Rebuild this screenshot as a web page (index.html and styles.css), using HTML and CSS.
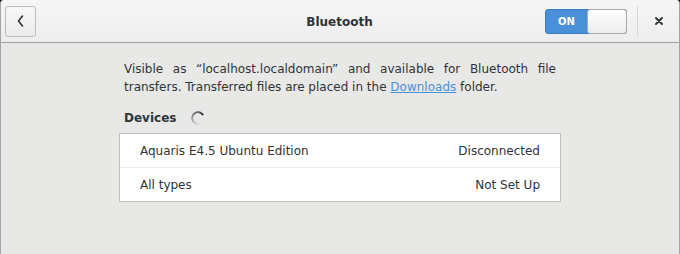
FILE: index.html
```html
<!DOCTYPE html>
<html lang="en">
<head>
    <meta charset="UTF-8">
    <meta name="viewport" content="width=device-width, initial-scale=1.0">
    <title>Bluetooth</title>
    <link rel="stylesheet" href="styles.css">
</head>
<body>
    <div class="window">
        <!-- Header bar -->
        <header class="headerbar">
            <div class="header-start">
                <button class="back-button" type="button" aria-label="Back">
                    <svg width="10" height="12" viewBox="0 0 10 12">
                        <path d="M6.5 1 L2.5 6 L6.5 11" fill="none" stroke="#2e3436" stroke-width="1.6" stroke-linecap="round" stroke-linejoin="round"/>
                    </svg>
                </button>
            </div>
            <div class="title">Bluetooth</div>
            <div class="header-end">
                <div class="switch">
                    <span class="switch-label">ON</span>
                    <span class="switch-knob"></span>
                </div>
                <span class="header-separator"></span>
                <button class="close-button" type="button" aria-label="Close">
                    <svg width="8" height="8" viewBox="0 0 8 8">
                        <path d="M1 1 L7 7 M7 1 L1 7" stroke="#2e3436" stroke-width="1.9" stroke-linecap="round"/>
                    </svg>
                </button>
            </div>
        </header>

        <!-- Panel content -->
        <main class="content">
            <p class="explanation"><span>Visible as “localhost.localdomain” and available for Bluetooth file transfers. Transferred files are placed in the <a href="#">Downloads</a> folder.</span></p>

            <div class="devices-heading">
                <span>Devices</span>
                <span class="spinner"></span>
            </div>

            <div class="device-list">
                <div class="device-row">
                    <span>Aquaris E4.5 Ubuntu Edition</span>
                    <span>Disconnected</span>
                </div>
                <div class="device-row">
                    <span>All types</span>
                    <span>Not Set Up</span>
                </div>
            </div>
        </main>
    </div>
</body>
</html>
```

FILE: styles.css
```css
:root {
    --text-color: #2e3436;
    --window-bg: #e8e8e7;
    --border-color: #b6b6b3;
    --accent-color: #4a90d9; /* Adwaita blue */
}

body {
    margin: 0;
    background: #000000;
    font-family: 'DejaVu Sans', sans-serif;
    font-size: 12px;
    color: var(--text-color);
}

.window {
    height: 254px;
    overflow: hidden;
    background: var(--window-bg);
    border-left: 1px solid #a4a4a4;
    border-right: 1px solid #a4a4a4;
    border-radius: 4px 4px 0 0;
}

/* Header bar */
.headerbar {
    height: 42px;
    display: grid;
    grid-template-columns: 1fr auto 1fr;
    align-items: center;
    padding: 0 5px 0 4px;
    background: linear-gradient(to bottom, #f6f6f6, #ededed);
    border-bottom: 1px solid #a2a2a0;
}

.header-start {
    display: flex;
}

.header-end {
    display: flex;
    align-items: center;
    justify-content: flex-end;
}

.title {
    font-weight: bold;
    font-size: 12px;
    padding-top: 1px;
}

.back-button {
    width: 31px;
    height: 31px;
    padding: 0;
    display: flex;
    align-items: center;
    justify-content: center;
    border: 1px solid #bdbdbb;
    border-radius: 3px;
    background: linear-gradient(to bottom, #f8f8f8, #ebebeb);
}

.switch {
    width: 82px;
    height: 25px;
    box-sizing: border-box;
    display: flex;
    background: var(--accent-color);
    border: 1px solid #3a7cc4;
    border-radius: 3px;
}

.switch-label {
    flex: 1;
    display: flex;
    align-items: center;
    justify-content: center;
    color: #ffffff;
    font-weight: bold;
    font-size: 10px;
}

.switch-knob {
    width: 40px;
    margin: -1px -1px -1px 0;
    box-sizing: border-box;
    background: linear-gradient(to bottom, #fdfdfd, #ececec);
    border: 1px solid #a9a9a9;
    border-radius: 3px;
}

.header-separator {
    width: 1px;
    height: 31px;
    margin: 0 5px 0 10px;
    background: #d6d6d4;
}

.close-button {
    width: 31px;
    height: 31px;
    padding: 0;
    display: flex;
    align-items: center;
    justify-content: center;
    border: none;
    background: transparent;
}

/* Content */
.content {
    width: 442px;
    margin: 0 auto;
}

.explanation {
    margin: 17px 0 0;
    padding: 0 5px;
    line-height: 18px;
    text-align: justify;
}

.explanation a {
    color: var(--accent-color);
    text-decoration: underline;
}

.devices-heading {
    display: flex;
    align-items: center;
    height: 18px;
    margin-top: 13px;
    padding-left: 5px;
    font-weight: bold;
}

/* Loading spinner */
.spinner {
    width: 14px;
    height: 14px;
    margin-left: 15px;
    border-radius: 50%;
    background: conic-gradient(from 160deg, rgba(46, 52, 54, 0) 0deg, rgba(46, 52, 54, 0.95) 260deg, rgba(46, 52, 54, 0) 262deg);
    -webkit-mask: radial-gradient(circle, transparent 4.5px, #000 5px);
    mask: radial-gradient(circle, transparent 4.5px, #000 5px);
}

.device-list {
    margin-top: 6px;
    background: #ffffff;
    border: 1px solid #bfbfbc;
}

.device-row {
    height: 33px;
    display: flex;
    align-items: center;
    justify-content: space-between;
    padding: 0 20px;
}

.device-row + .device-row {
    border-top: 1px solid #ececec;
}
```
